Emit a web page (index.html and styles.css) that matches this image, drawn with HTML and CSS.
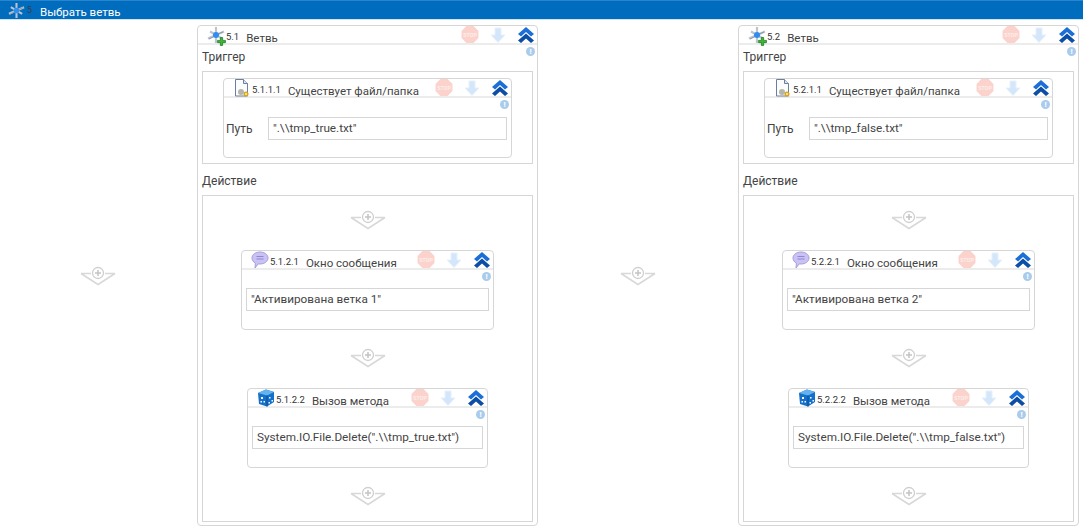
FILE: index.html
```html
<!DOCTYPE html>
<html lang="en">
<head>
  <meta charset="UTF-8" />
  <title>Выбрать ветвь</title>
  <link rel="stylesheet" href="styles.css">
</head>
<body>
  <svg class="defs" width="0" height="0">
    <symbol id="hub" viewBox="0 0 18 18">
      <path d="M9 1v16M1 12.500L17 5.500M3 5.500L15 12.500" stroke="#bcc4ce" stroke-width="2.200" fill="none"/>
      <path d="M2 13L7 10.500M11 8L16 6" stroke="#8d98a6" stroke-width="1" fill="none"/>
      <circle cx="9" cy="9" r="3" fill="#2f8df0"/>
    </symbol>
    <symbol id="plus" viewBox="0 0 8 8">
      <path d="M3 .5h2v2.500h2.500v2H5v2.500H3V5H.5V3H3z" fill="#3fb53a" stroke="#1d7f1f" stroke-width=".7"/>
    </symbol>
    <symbol id="file" viewBox="0 0 18 18">
      <path d="M2.500 .5h8l4 4v12.500h-12z" fill="#fbfcfe" stroke="#6c7f9c"/>
      <path d="M10.500 .5v4h4" fill="#dbe4f0" stroke="#6c7f9c"/>
      <circle cx="8" cy="13" r="3" fill="#b5b5a8"/>
      <circle cx="13" cy="15" r="2.500" fill="#d8a520"/>
      <circle cx="13" cy="15" r="1" fill="#fff2b8"/>
    </symbol>
    <symbol id="bubble" viewBox="0 0 18 18">
      <path d="M9 1c4.500 0 8 2.500 8 6s-3.500 6-8 6c-.7 0-1.200 0-1.800-.1L4 17l.4-4.900C2.300 11 1 9.200 1 7c0-3.500 3.500-6 8-6z" fill="#c9c2f2" stroke="#a79fe0"/>
      <path d="M5.500 5.500h7M5.500 8h7" stroke="#8f86d4" stroke-width="1"/>
    </symbol>
    <symbol id="cube" viewBox="0 0 18 18">
      <path d="M1 4l8-3.500L17 3v10l-7 4.500L2 15z" fill="#1470c8"/>
      <path d="M1 4l9 2.500L17 3 9 .5z" fill="#63b3f0"/>
      <path d="M10 6.500v11" stroke="#0a4c94" stroke-width="1"/>
      <path d="M4 8h2v2H4zM6.500 12h1.500v1.500H6.500zM3.500 12h1.500v1.500H3.500zM12 8h1.500v1.500H12zM14.500 11h1.500v1.500h-1.500zM11.500 13h1.500v1.500h-1.500z" fill="#fff"/>
    </symbol>
    <symbol id="down" viewBox="0 0 16 16">
      <path d="M5 1h6v7h4l-7 7.500L1 8h4z" fill="#d4e6fa" stroke="#e6f0fc"/>
    </symbol>
    <symbol id="collapse" viewBox="0 0 18 18">
      <path d="M9 1l8 7-3 2.500-5-4.500-5 4.500-3-2.500z" fill="#1b6fd6"/>
      <path d="M9 7.500l8 7-3 2.500-5-4.500-5 4.500-3-2.500z" fill="#0c4da6"/>
    </symbol>
    <symbol id="drop" viewBox="0 0 36 24">
      <path d="M1 8.500h10M25 8.500h10M1 8.500l17 11 17-11" stroke="#d8d8d8" stroke-width="1.500" fill="none"/>
      <circle cx="18" cy="8" r="5.500" fill="#fff" stroke="#cfcfcf" stroke-width="1.300"/>
      <path d="M18 5v6M15 8h6" stroke="#c4c4c4" stroke-width="1.500"/>
    </symbol>
  </svg>

  <div class="topbar">
    <svg class="topbar-icon"><use href="#hub"/></svg>
    <span class="topbar-num">5</span>
    <span class="topbar-title">Выбрать ветвь</span>
  </div>

  <div class="canvas">
    <svg class="drop drop-outer"><use href="#drop"/></svg>

    <section class="branch">
      <header class="act-head">
        <span class="act-icon"><svg><use href="#hub"/></svg><svg class="act-plus"><use href="#plus"/></svg></span>
        <span class="act-num">5.1</span>
        <span class="act-title">Ветвь</span>
        <span class="ctl-stop">STOP</span>
        <svg class="ctl-down"><use href="#down"/></svg>
        <svg class="ctl-up"><use href="#collapse"/></svg>
      </header>
      <div class="info-row"><span class="info">!</span></div>
      <div class="section-label label-trigger">Триггер</div>
      <div class="box box-trigger">
        <div class="activity w-trigger">
          <header class="act-head">
            <span class="act-icon"><svg><use href="#file"/></svg></span>
            <span class="act-num">5.1.1.1</span>
            <span class="act-title">Существует файл/папка</span>
            <span class="ctl-stop">STOP</span>
            <svg class="ctl-down"><use href="#down"/></svg>
            <svg class="ctl-up"><use href="#collapse"/></svg>
          </header>
          <div class="info-row"><span class="info">!</span></div>
          <div class="path-row">
            <span class="path-label">Путь</span>
            <div class="field">".\\tmp_true.txt"</div>
          </div>
        </div>
      </div>
      <div class="section-label label-action">Действие</div>
      <div class="box box-action">
        <svg class="drop"><use href="#drop"/></svg>
        <div class="activity w-message">
          <header class="act-head">
            <span class="act-icon"><svg><use href="#bubble"/></svg></span>
            <span class="act-num">5.1.2.1</span>
            <span class="act-title">Окно сообщения</span>
            <span class="ctl-stop">STOP</span>
            <svg class="ctl-down"><use href="#down"/></svg>
            <svg class="ctl-up"><use href="#collapse"/></svg>
          </header>
          <div class="info-row"><span class="info">!</span></div>
          <div class="field">"Активирована ветка 1"</div>
        </div>
        <svg class="drop"><use href="#drop"/></svg>
        <div class="activity w-method">
          <header class="act-head">
            <span class="act-icon"><svg><use href="#cube"/></svg></span>
            <span class="act-num">5.1.2.2</span>
            <span class="act-title">Вызов метода</span>
            <span class="ctl-stop">STOP</span>
            <svg class="ctl-down"><use href="#down"/></svg>
            <svg class="ctl-up"><use href="#collapse"/></svg>
          </header>
          <div class="info-row"><span class="info">!</span></div>
          <div class="field">System.IO.File.Delete(".\\tmp_true.txt")</div>
        </div>
        <svg class="drop"><use href="#drop"/></svg>
      </div>
    </section>

    <svg class="drop drop-middle"><use href="#drop"/></svg>

    <section class="branch">
      <header class="act-head">
        <span class="act-icon"><svg><use href="#hub"/></svg><svg class="act-plus"><use href="#plus"/></svg></span>
        <span class="act-num">5.2</span>
        <span class="act-title">Ветвь</span>
        <span class="ctl-stop">STOP</span>
        <svg class="ctl-down"><use href="#down"/></svg>
        <svg class="ctl-up"><use href="#collapse"/></svg>
      </header>
      <div class="info-row"><span class="info">!</span></div>
      <div class="section-label label-trigger">Триггер</div>
      <div class="box box-trigger">
        <div class="activity w-trigger">
          <header class="act-head">
            <span class="act-icon"><svg><use href="#file"/></svg></span>
            <span class="act-num">5.2.1.1</span>
            <span class="act-title">Существует файл/папка</span>
            <span class="ctl-stop">STOP</span>
            <svg class="ctl-down"><use href="#down"/></svg>
            <svg class="ctl-up"><use href="#collapse"/></svg>
          </header>
          <div class="info-row"><span class="info">!</span></div>
          <div class="path-row">
            <span class="path-label">Путь</span>
            <div class="field">".\\tmp_false.txt"</div>
          </div>
        </div>
      </div>
      <div class="section-label label-action">Действие</div>
      <div class="box box-action">
        <svg class="drop"><use href="#drop"/></svg>
        <div class="activity w-message">
          <header class="act-head">
            <span class="act-icon"><svg><use href="#bubble"/></svg></span>
            <span class="act-num">5.2.2.1</span>
            <span class="act-title">Окно сообщения</span>
            <span class="ctl-stop">STOP</span>
            <svg class="ctl-down"><use href="#down"/></svg>
            <svg class="ctl-up"><use href="#collapse"/></svg>
          </header>
          <div class="info-row"><span class="info">!</span></div>
          <div class="field">"Активирована ветка 2"</div>
        </div>
        <svg class="drop"><use href="#drop"/></svg>
        <div class="activity w-method">
          <header class="act-head">
            <span class="act-icon"><svg><use href="#cube"/></svg></span>
            <span class="act-num">5.2.2.2</span>
            <span class="act-title">Вызов метода</span>
            <span class="ctl-stop">STOP</span>
            <svg class="ctl-down"><use href="#down"/></svg>
            <svg class="ctl-up"><use href="#collapse"/></svg>
          </header>
          <div class="info-row"><span class="info">!</span></div>
          <div class="field">System.IO.File.Delete(".\\tmp_false.txt")</div>
        </div>
        <svg class="drop"><use href="#drop"/></svg>
      </div>
    </section>
  </div>
</body>
</html>
```

FILE: styles.css
```css
html, body {
  height: 527px;
  overflow: hidden;
}
body {
  margin: 0;
  font-family: Roboto, "Open Sans", sans-serif;
  font-size: 12px;
  color: #444;
  background: #fff;
}
.defs {
  display: block;
  height: 0;
}

.topbar {
  box-sizing: border-box;
  height: 20px;
  display: flex;
  align-items: center;
  background: #006cbe;
  border-top: 1px solid #2a85cc;
  border-bottom: 1px solid #cfe3f3;
  color: #fff;
}
.topbar-icon {
  width: 17px;
  height: 17px;
  margin-left: 8px;
}
.topbar-num {
  font-size: 9px;
  width: 13px;
  margin-left: 2px;
  color: #3a3f4a;
}
.topbar-title {
  font-size: 11.5px;
  margin-top: 4px;
}

.canvas {
  display: flex;
  align-items: flex-start;
  padding-top: 5px;
}
.drop {
  display: block;
  width: 36px;
  height: 24px;
  flex: none;
}
.drop-outer {
  margin: 240px 81px 0 80px;
}
.drop-middle {
  margin: 240px 82px 0 82px;
}

.branch {
  width: 341px;
  height: 501px;
  flex: none;
  box-sizing: border-box;
  border: 1px solid #d6d6d6;
  border-radius: 4px;
}
.activity {
  box-sizing: border-box;
  border: 1px solid #d6d6d6;
  border-radius: 4px;
  height: 80px;
  flex: none;
}
.w-trigger {
  width: 289px;
}
.w-message {
  width: 253px;
}
.w-method {
  width: 241px;
}

.act-head {
  height: 17px;
  display: flex;
  align-items: center;
  border-bottom: 2px solid #ececec;
}
.act-icon {
  width: 18px;
  height: 18px;
  margin-left: 9px;
  flex: none;
  position: relative;
}
.act-icon svg {
  display: block;
  width: 18px;
  height: 18px;
}
.act-icon .act-plus {
  position: absolute;
  right: -1px;
  bottom: -2px;
  width: 9px;
  height: 9px;
}
.act-num {
  font-size: 9.5px;
  margin: 4px 7px 0 1px;
  color: #333;
}
.act-title {
  font-size: 11.5px;
  margin-top: 7px;
  flex: 1;
  white-space: nowrap;
}
.ctl-stop {
  width: 18px;
  height: 18px;
  flex: none;
  background: #fcd3cc;
  clip-path: polygon(30% 3%, 70% 3%, 97% 30%, 97% 70%, 70% 97%, 30% 97%, 3% 70%, 3% 30%);
  color: #fdeeea;
  font-family: "Liberation Sans", sans-serif;
  font-size: 5px;
  font-weight: 700;
  line-height: 18px;
  text-align: center;
}
.ctl-up {
  width: 18px;
  height: 18px;
  flex: none;
  margin-right: 2px;
}
.ctl-down {
  width: 16px;
  height: 16px;
  margin: 0 11px;
  flex: none;
}

.info-row {
  display: flex;
  justify-content: flex-end;
  height: 12px;
  padding: 2px 2px 0 0;
  box-sizing: border-box;
}
.info {
  width: 9px;
  height: 9px;
  border-radius: 50%;
  background: #a9cbec;
  color: #fff;
  font-size: 8px;
  font-weight: 700;
  line-height: 9px;
  text-align: center;
}

.section-label {
  font-size: 12px;
  line-height: 16px;
  padding-left: 4px;
  height: 22px;
}
.label-trigger {
  margin-top: -8px;
}
.label-action {
  margin-top: 9px;
}

.box {
  box-sizing: border-box;
  margin: 0 4px;
  border: 1px solid #d6d6d6;
  display: flex;
  flex-direction: column;
  align-items: center;
}
.box-trigger {
  height: 93px;
  padding-top: 6px;
}
.box-action {
  height: 327px;
  padding-top: 13px;
  gap: 17px;
}

.field {
  box-sizing: border-box;
  height: 23px;
  margin: 0 4px;
  padding-left: 4px;
  border: 1px solid #d6d6d6;
  line-height: 21px;
  font-size: 11.75px;
  flex: 1;
  white-space: nowrap;
}
.activity > .field {
  margin-top: 6px;
}
.path-row {
  display: flex;
  align-items: center;
  margin-top: 7px;
}
.path-label {
  width: 39px;
  padding-left: 2px;
  box-sizing: content-box;
  font-size: 12px;
}
.path-row .field {
  margin-left: 3px;
}
```
